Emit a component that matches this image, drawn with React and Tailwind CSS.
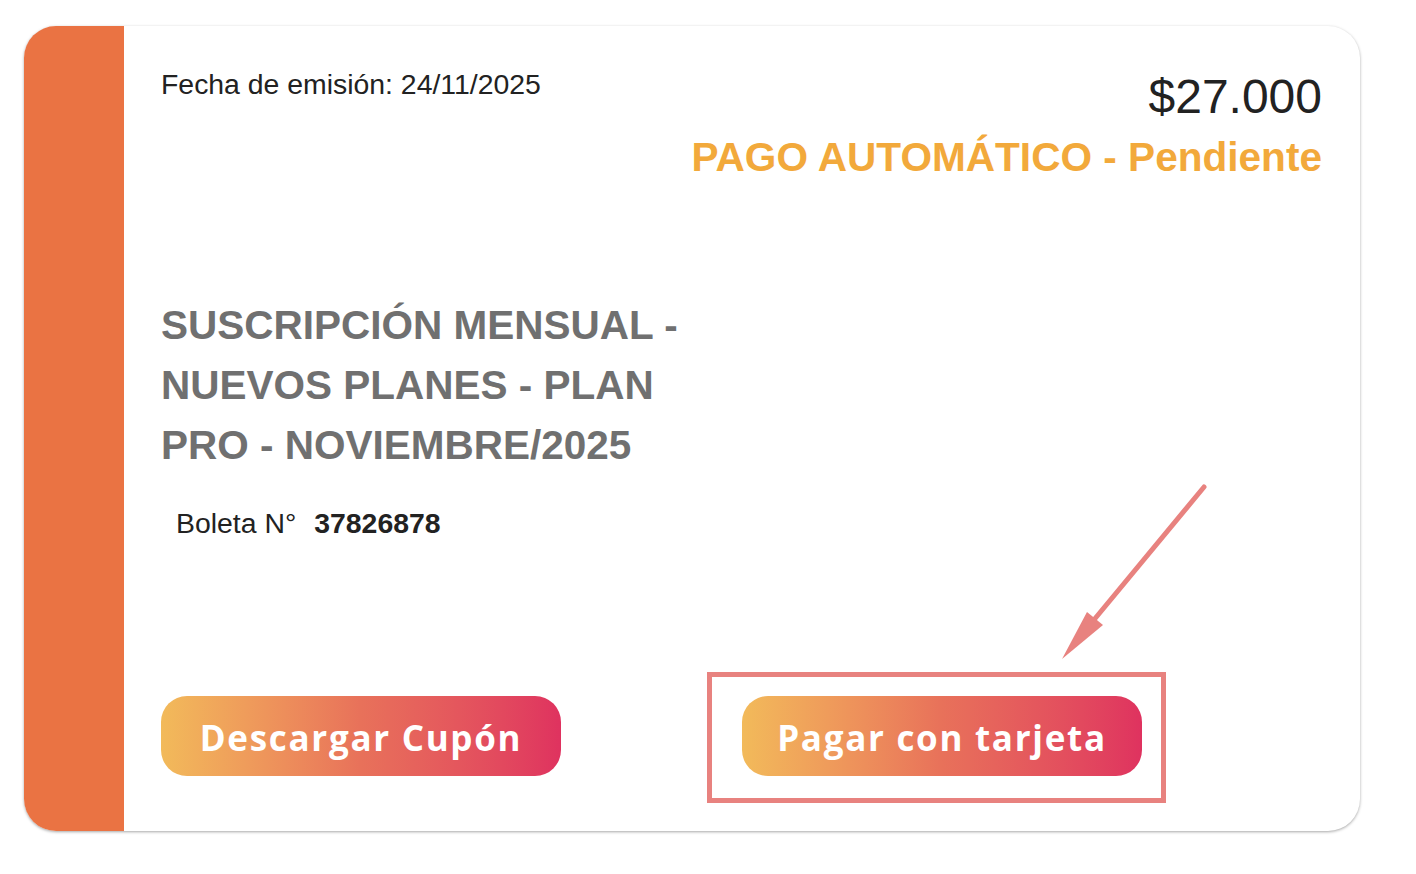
import React from 'react'

const sans = { fontFamily: '"Liberation Sans", Arial, sans-serif' }

function GradientButton({ children }) {
  return (
    <button
      className="w-[400px] h-[80px] rounded-[26px] bg-gradient-to-r from-[#f2ba5a] via-[#e8715a] to-[#df325f] text-white font-bold text-[35px] tracking-[1.7px] flex items-center justify-center pt-[4px]"
      style={{ fontFamily: '"Open Sans", "Noto Sans", sans-serif' }}
    >
      {children}
    </button>
  )
}

export default function App() {
  return (
    <div className="relative w-[1416px] h-[874px] bg-white overflow-hidden" style={sans}>
      <div className="ml-[24px] mt-[26px] w-[1336px] h-[805px] flex rounded-[32px] overflow-hidden bg-white shadow-[0_1px_3px_rgba(0,0,0,0.35)]">
        <div className="w-[100px] shrink-0 bg-[#ea7343]" />

        <div className="flex-1 flex flex-col pl-[37px] pr-[38px] pt-[42px] pb-[55px]">
          <div className="flex justify-between items-start">
            <p className="text-[28.4px] leading-[32px] text-[#222]">Fecha de emisión: 24/11/2025</p>
            <div className="flex flex-col items-end pt-[1px]">
              <p className="text-[48px] leading-[56px] text-[#222]">$27.000</p>
              <p className="mt-[8px] text-[40.6px] leading-[48px] font-bold text-[#f2a93b]">
                PAGO AUTOMÁTICO - Pendiente
              </p>
            </div>
          </div>

          <h2 className="mt-[114px] w-[580px] text-[40.5px] leading-[60px] font-bold text-[#707070]">
            SUSCRIPCIÓN MENSUAL - NUEVOS PLANES - PLAN PRO - NOVIEMBRE/2025
          </h2>

          <p className="mt-[32px] ml-[15px] text-[28.4px] leading-[32px] text-[#222]">
            Boleta N°<span className="ml-[18px] font-bold">37826878</span>
          </p>

          <div className="mt-auto flex gap-[181px]">
            <GradientButton>Descargar Cupón</GradientButton>
            <GradientButton>Pagar con tarjeta</GradientButton>
          </div>
        </div>
      </div>

      {/* annotation: highlight box + arrow */}
      <div className="absolute left-[707px] top-[672px] w-[459px] h-[131px] border-[5px] border-[#e8827f] pointer-events-none" />
      <svg className="absolute left-0 top-0 pointer-events-none" width="1416" height="874" viewBox="0 0 1416 874">
        <line x1="1204" y1="487" x2="1093" y2="621" stroke="#e8827f" strokeWidth="5" strokeLinecap="round" />
        <polygon points="1062,659 1087,612 1103,625" fill="#e8827f" />
      </svg>
    </div>
  )
}
